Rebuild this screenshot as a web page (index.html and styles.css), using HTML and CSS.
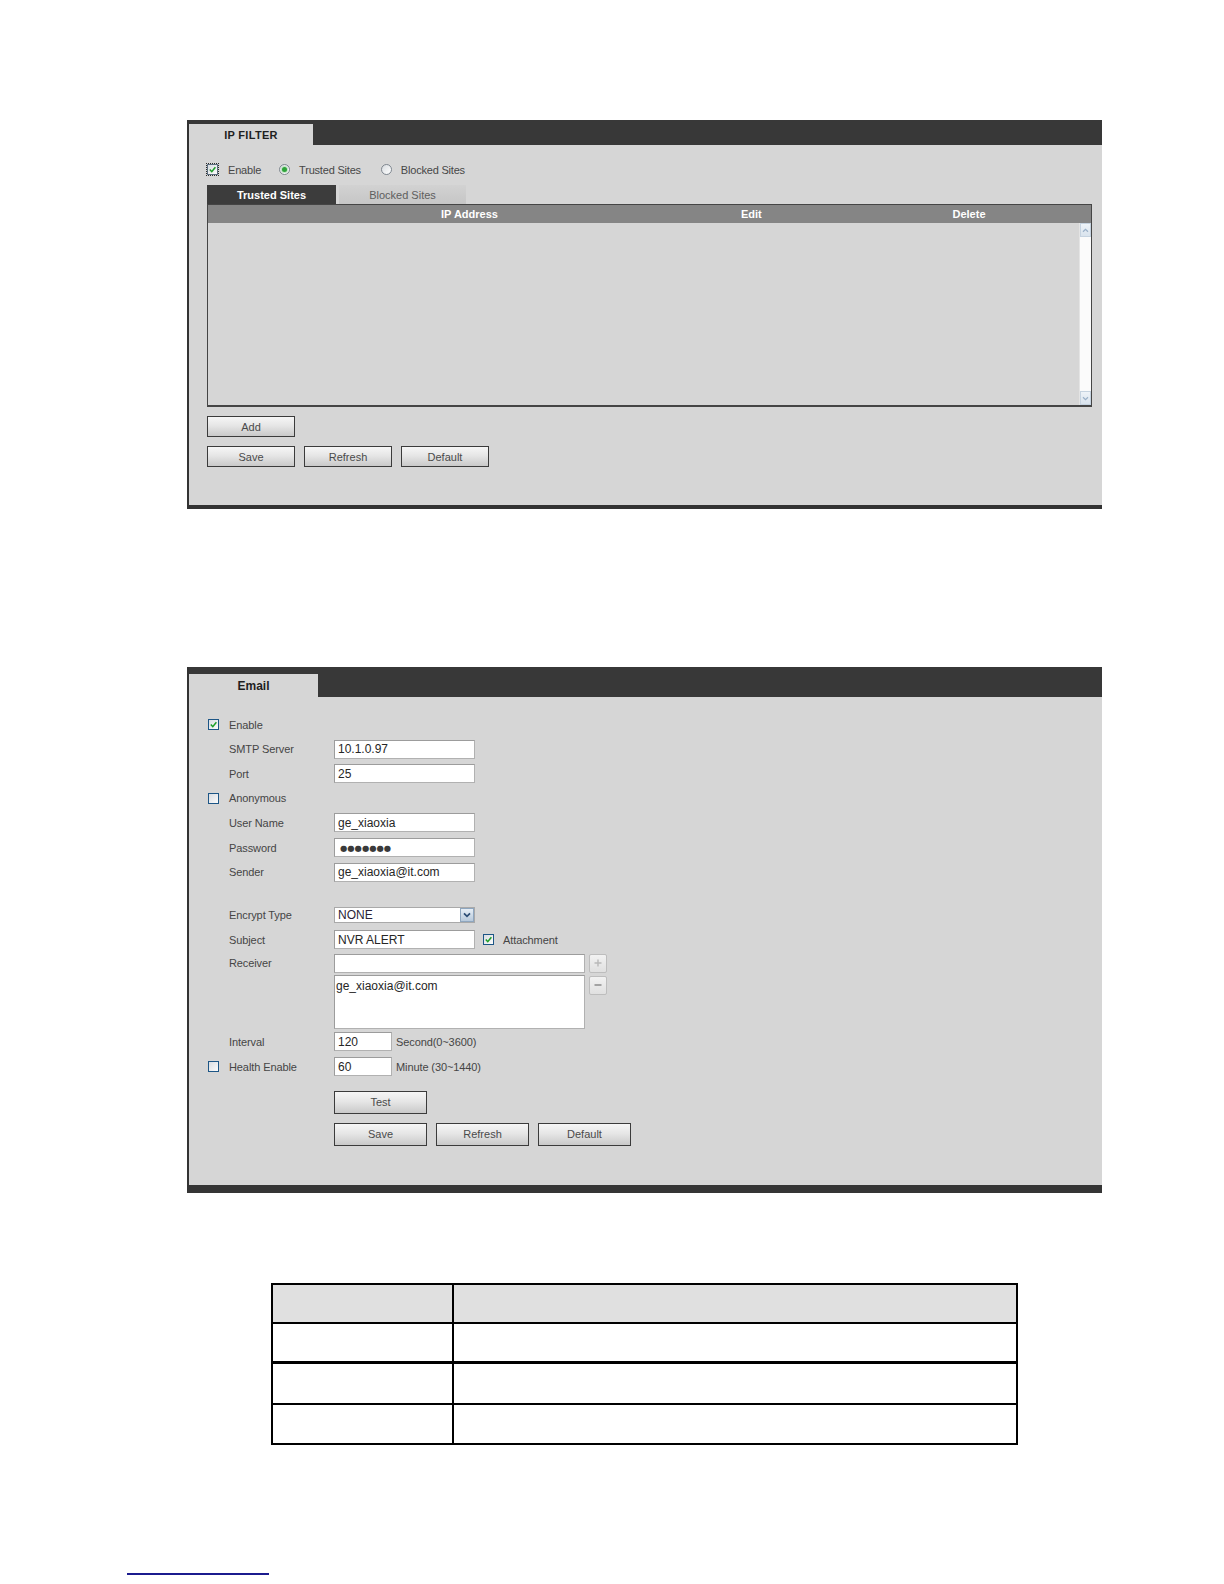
FILE: index.html
```html
<!DOCTYPE html>
<html>
<head>
<meta charset="utf-8">
<title>IP Filter / Email</title>
<link rel="stylesheet" href="styles.css">
</head>
<body>
<div class="panels">
  <section class="panel panel-ip">
    <div class="panel-head head-ip"><div class="tab tab-ip">IP FILTER</div></div>
    <div class="ip-body">
      <div class="opts">
        <span class="cb checked focus"><svg viewBox="0 0 10 10"><path d="M2 5 L4.2 7.4 L8.2 2.4" /></svg></span>
        <span class="opt-label l-enable">Enable</span>
        <span class="radio on"><span class="dot"></span></span>
        <span class="opt-label l-trusted">Trusted Sites</span>
        <span class="radio"></span>
        <span class="opt-label">Blocked Sites</span>
      </div>
      <div class="subtabs">
        <div class="subtab active">Trusted Sites</div>
        <div class="subtab">Blocked Sites</div>
      </div>
      <div class="list">
        <div class="list-head">
          <div class="c-ip">IP Address</div>
          <div class="c-edit">Edit</div>
          <div class="c-del">Delete</div>
        </div>
        <div class="list-body">
          <div class="scrollbar">
            <span class="sb-btn"><svg viewBox="0 0 8 6"><path d="M1 4.5 L4 1.5 L7 4.5" /></svg></span>
            <span class="sb-btn"><svg viewBox="0 0 8 6"><path d="M1 1.5 L4 4.5 L7 1.5" /></svg></span>
          </div>
        </div>
      </div>
      <div class="btn-row ip-btns"><div class="btn">Add</div></div>
      <div class="btn-row ip-btns"><div class="btn">Save</div><div class="btn">Refresh</div><div class="btn">Default</div></div>
    </div>
  </section>

  <section class="panel panel-email">
    <div class="panel-head head-email"><div class="tab tab-email">Email</div></div>
    <div class="email-body">
      <div class="frow">
        <span class="cb checked"><svg viewBox="0 0 10 10"><path d="M2 5 L4.2 7.4 L8.2 2.4" /></svg></span>
        <span class="flabel">Enable</span><span></span>
      </div>
      <div class="frow"><span></span><span class="flabel">SMTP Server</span><div class="ctl"><div class="field">10.1.0.97</div></div></div>
      <div class="frow"><span></span><span class="flabel">Port</span><div class="ctl"><div class="field">25</div></div></div>
      <div class="frow"><span class="cb"></span><span class="flabel">Anonymous</span><span></span></div>
      <div class="frow"><span></span><span class="flabel">User Name</span><div class="ctl"><div class="field">ge_xiaoxia</div></div></div>
      <div class="frow"><span></span><span class="flabel">Password</span><div class="ctl"><div class="field pwd">●●●●●●●</div></div></div>
      <div class="frow"><span></span><span class="flabel">Sender</span><div class="ctl"><div class="field">ge_xiaoxia@it.com</div></div></div>
      <div class="fspacer"></div>
      <div class="frow"><span></span><span class="flabel">Encrypt Type</span>
        <div class="ctl"><div class="select"><span class="sel-val">NONE</span><span class="sel-arrow"><svg viewBox="0 0 8 6"><path d="M1 1.3 L4 4.3 L7 1.3" /></svg></span></div></div>
      </div>
      <div class="frow"><span></span><span class="flabel">Subject</span>
        <div class="ctl"><div class="field">NVR ALERT</div>
          <span class="cb checked cb-attach"><svg viewBox="0 0 10 10"><path d="M2 5 L4.2 7.4 L8.2 2.4" /></svg></span>
          <span class="after-label attach">Attachment</span>
        </div>
      </div>
      <div class="frow row-recv"><span></span><span class="flabel">Receiver</span>
        <div class="ctl"><div class="field wide"></div>
          <span class="sq-btn"><svg viewBox="0 0 10 10"><path d="M5 1.5 V8.5 M1.5 5 H8.5" /></svg></span>
        </div>
      </div>
      <div class="frow row-area"><span></span><span></span>
        <div class="ctl ctl-top"><div class="area">ge_xiaoxia@it.com</div>
          <span class="sq-btn minus"><svg viewBox="0 0 10 10"><path d="M1.5 5 H8.5" /></svg></span>
        </div>
      </div>
      <div class="frow row-25"><span></span><span class="flabel">Interval</span>
        <div class="ctl"><div class="field short">120</div><span class="after-label">Second(0~3600)</span></div>
      </div>
      <div class="frow row-25"><span class="cb"></span><span class="flabel">Health Enable</span>
        <div class="ctl"><div class="field short">60</div><span class="after-label">Minute (30~1440)</span></div>
      </div>
      <div class="btn-row email-btns test-row"><div class="btn big">Test</div></div>
      <div class="btn-row email-btns save-row"><div class="btn big">Save</div><div class="btn big">Refresh</div><div class="btn big">Default</div></div>
    </div>
  </section>
</div>

<table class="doc-table">
  <tr class="r-head"><td class="c1"></td><td></td></tr>
  <tr class="r2"><td class="c1"></td><td></td></tr>
  <tr class="r3"><td class="c1"></td><td></td></tr>
  <tr class="r4"><td class="c1"></td><td></td></tr>
</table>

<div class="foot-link"></div>
</body>
</html>
```

FILE: styles.css
```css
* { box-sizing: border-box; }
html, body { margin: 0; padding: 0; background: #ffffff; }
body {
  width: 1224px;
  height: 1584px;
  overflow: hidden;
  font-family: "Liberation Sans", Arial, sans-serif;
  font-size: 11px;
  color: #414141;
}

.panels { padding: 120px 0 0 187px; }

.panel {
  width: 915px;
  background: #d6d6d6;
  border-left: 2px solid #333333;
}
.panel-ip { border-bottom: 4px solid #333333; }
.panel-email { margin-top: 158px; border-bottom: 8px solid #353535; }

.panel-head {
  background: #383838;
  display: flex;
  align-items: flex-end;
}
.head-ip { height: 25px; }
.head-email { height: 30px; }

.tab {
  background: #d6d6d6;
  display: flex;
  align-items: center;
  justify-content: center;
  font-weight: bold;
  color: #1f1f1f;
}
.tab-ip { width: 124px; height: 21px; font-size: 11px; letter-spacing: 0.3px; }
.tab-email { width: 129px; height: 23px; font-size: 12px; padding-top: 1px; }

/* checkboxes / radios */
.cb {
  width: 11px;
  height: 11px;
  border: 1px solid #1d5686;
  background: linear-gradient(135deg, #d9dde2, #fbfbfb);
  display: inline-flex;
  align-items: center;
  justify-content: center;
}
.cb svg { width: 9px; height: 9px; }
.cb svg path { fill: none; stroke: #1e9e28; stroke-width: 1.7; }
.cb.focus { outline: 1px dotted #2b2b2b; outline-offset: 0; border-color: #5d6f80; }

.radio {
  width: 11px;
  height: 11px;
  border-radius: 50%;
  border: 1px solid #7f8790;
  background: linear-gradient(135deg, #d8dce0, #ffffff);
  display: inline-flex;
  align-items: center;
  justify-content: center;
}
.radio .dot { width: 5px; height: 5px; border-radius: 50%; background: #2ea33a; box-shadow: 0 0 0 1px #bfe3c2; }

/* IP FILTER body */
.ip-body { padding: 17px 0 38px 18px; }

.opts { display: flex; align-items: center; height: 15px; }
.opts .cb { margin-right: 10px; }
.opt-label { color: #474747; letter-spacing: -0.2px; }
.l-enable { margin-right: 18px; }
.opts .radio { margin-right: 9px; }
.l-trusted { margin-right: 20px; }

.subtabs { display: flex; margin-top: 8px; height: 19px; }
.subtab {
  height: 19px;
  display: flex;
  align-items: center;
  justify-content: center;
  width: 127px;
  margin-left: 3px;
  background: linear-gradient(#d2d2d2, #c6c6c6);
  color: #5e5e5e;
}
.subtab.active {
  width: 129px;
  margin-left: 0;
  background: #3c3c3c;
  color: #ffffff;
  font-weight: bold;
}

.list {
  width: 885px;
  height: 203px;
  border: 1px solid #454545;
  border-bottom-width: 2px;
  display: flex;
  flex-direction: column;
}
.list-head {
  height: 18px;
  background: #858585;
  color: #ffffff;
  font-weight: bold;
  display: grid;
  grid-template-columns: 523px 116px 1fr;
  align-items: center;
}
.c-ip { text-align: center; }
.c-edit { text-align: left; padding-left: 10px; }
.c-del { text-align: center; }

.list-body {
  flex: 1;
  background: #d6d6d6;
  display: flex;
  justify-content: flex-end;
}
.scrollbar {
  width: 12px;
  background: #fbfbfb;
  border-left: 1px solid #e4e4e4;
  display: flex;
  flex-direction: column;
  justify-content: space-between;
}
.sb-btn {
  height: 14px;
  background: linear-gradient(#eef3f8, #d9e3ed);
  border: 1px solid #c6d3e0;
  display: flex;
  align-items: center;
  justify-content: center;
}
.sb-btn svg { width: 7px; height: 5px; }
.sb-btn svg path { fill: none; stroke: #9ab0c8; stroke-width: 1.4; }

/* buttons */
.btn-row { display: flex; gap: 9px; }
.ip-btns { margin-top: 9px; }
.btn {
  width: 88px;
  height: 21px;
  border: 1px solid #3b3b3b;
  background: linear-gradient(#f6f6f6 0%, #e6e6e6 45%, #c9c9c9 100%);
  color: #4a4a4a;
  display: flex;
  align-items: center;
  justify-content: center;
  font-size: 11px;
}
.btn.big { width: 93px; height: 23px; }

/* EMAIL body */
.email-body { padding: 15.3px 0 39px 19px; }

.frow {
  display: grid;
  grid-template-columns: 21px 105px 1fr;
  align-items: center;
  height: 24.6px;
}
.frow.row-recv { height: 23px; }
.frow.row-area { height: 54.6px; align-items: start; }
.frow.row-25 { height: 25px; }
.fspacer { height: 18.2px; }

.flabel { color: #454545; letter-spacing: -0.1px; }

.ctl { display: flex; align-items: center; }
.ctl-top { align-items: flex-start; }

.field {
  width: 141px;
  height: 19px;
  background: #ffffff;
  border: 1px solid #b1b1b1;
  border-top-color: #9c9c9c;
  border-left-color: #9c9c9c;
  font-size: 12px;
  color: #262626;
  padding-left: 3px;
  display: flex;
  align-items: center;
  white-space: nowrap;
}
.field.wide { width: 251px; }
.field.short { width: 58px; }
.field.pwd {
  font-family: "DejaVu Sans", sans-serif;
  font-size: 8.4px;
  letter-spacing: 0;
  color: #3a3a3a;
  padding-left: 5px;
}

.select {
  width: 141px;
  height: 16px;
  background: #ffffff;
  border: 1px solid #a9a9a9;
  display: flex;
  align-items: center;
  justify-content: space-between;
  font-size: 12px;
  color: #2a1f36;
  padding-left: 3px;
}
.sel-arrow {
  width: 14px;
  height: 14px;
  background: linear-gradient(#e6eef6, #b7c9db);
  border: 1px solid #8ea6bf;
  display: flex;
  align-items: center;
  justify-content: center;
}
.sel-arrow svg { width: 8px; height: 6px; }
.sel-arrow svg path { fill: none; stroke: #2b4c74; stroke-width: 1.7; }

.cb-attach { margin-left: 8px; }
.after-label { margin-left: 4px; color: #454545; white-space: nowrap; letter-spacing: -0.1px; }
.after-label.attach { margin-left: 9px; }

.sq-btn {
  width: 18px;
  height: 19px;
  margin-left: 4px;
  background: linear-gradient(#f2f2f2, #e0e0e0);
  border: 1px solid #bdbdbd;
  border-radius: 2px;
  display: flex;
  align-items: center;
  justify-content: center;
}
.sq-btn svg { width: 10px; height: 10px; }
.sq-btn svg path { fill: none; stroke: #b9b9b9; stroke-width: 1.4; }
.sq-btn.minus { margin-top: 1px; }
.sq-btn.minus svg path { stroke: #a3a3a3; stroke-width: 2; }

.area {
  width: 251px;
  height: 54px;
  background: #ffffff;
  border: 1px solid #b1b1b1;
  border-top-color: #9c9c9c;
  border-left-color: #9c9c9c;
  font-size: 12px;
  color: #262626;
  padding: 3px 0 0 1px;
}

.email-btns { margin-left: 126px; }
.test-row { margin-top: 11.5px; }
.save-row { margin-top: 9px; gap: 9px; }

/* document table */
.doc-table {
  margin: 90px 0 0 271px;
  width: 747px;
  border-collapse: collapse;
}
.doc-table td {
  border: 2px solid #000000;
  padding: 0;
}
.doc-table td.c1 { width: 181px; }
.doc-table .r-head td { height: 39px; background: #e0e0e0; }
.doc-table .r2 td { height: 40px; border-bottom-width: 3px; }
.doc-table .r3 td { height: 41px; }
.doc-table .r4 td { height: 40px; }

.foot-link {
  margin: 128px 0 0 127px;
  width: 142px;
  height: 0;
  border-top: 2px solid #1b1b8e;
}
```
